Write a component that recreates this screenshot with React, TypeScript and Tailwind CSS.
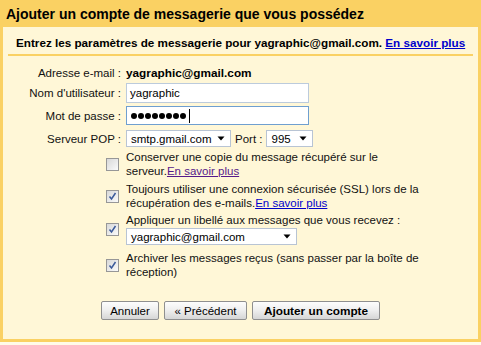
import React from "react";

const font = { fontFamily: '"Liberation Sans", Arial, sans-serif' };

function Check({ checked }: { checked: boolean }) {
  return (
    <span className="relative inline-block w-[13px] h-[13px] border border-[#979797] bg-gradient-to-br from-[#d8d8d8] to-[#fbfbfb]">
      {checked && (
        <svg className="absolute left-[1px] top-[1px]" width="9" height="9" viewBox="0 0 9 9">
          <path d="M1.5 4.5 L3.5 7 L7.5 1" fill="none" stroke="#3b5a9a" strokeWidth="1.5" />
        </svg>
      )}
    </span>
  );
}

function Arrow() {
  return (
    <svg width="8" height="5" viewBox="0 0 8 5" className="shrink-0">
      <path d="M0.5 0.5 L7.5 0.5 L4 4.5 Z" fill="#000" />
    </svg>
  );
}

function Select({ value, w }: { value: string; w: string }) {
  return (
    <div className={`${w} h-full bg-white border border-[#b8c4d4] flex items-center justify-between pl-[4px] pr-[5px] text-black`}>
      <span>{value}</span>
      <Arrow />
    </div>
  );
}

function Btn({ children, bold, w }: { children: React.ReactNode; bold?: boolean; w: string }) {
  return (
    <div
      className={`${w} h-[19px] flex items-center justify-center border border-[#8f8f8f] rounded-[2px] bg-gradient-to-b from-[#fdfdfd] via-[#eeeeee] to-[#d6d6d6] text-black ${bold ? "font-bold text-[11.8px]" : "text-[11.5px]"}`}
    >
      {children}
    </div>
  );
}

export default function App() {
  return (
    <div style={font} className="w-[481px] h-[345px] bg-[#fffbe9] text-[11.5px] text-[#111] leading-[14px]">
      <div className="bg-[#fad163] px-[3px] pb-[3px]">
        <div className="h-[27px] flex items-center pl-[3px] font-bold text-[14px] text-black">
          Ajouter un compte de messagerie que vous possédez
        </div>
        <div className="bg-[#fff7d7] h-[312px] flex flex-col">
          <div className="pt-[8px] pl-[13px] h-[27px] font-bold text-[11.7px] leading-[15px] text-black whitespace-nowrap">
            Entrez les paramètres de messagerie pour yagraphic@gmail.com.{" "}
            <span className="text-[#0000cc] underline">En savoir plus</span>
          </div>
          <div className="mx-[5px] h-[2px] bg-[#fad163]" />

          <div className="grid grid-cols-[118px_1fr] gap-x-[5px] mt-[8px]">
            <div className="h-[18px] flex items-center justify-end">Adresse e-mail :</div>
            <div className="h-[18px] flex items-center font-bold text-[11.8px] text-black">yagraphic@gmail.com</div>

            <div className="mt-[1px] h-[20px] flex items-center justify-end">Nom d'utilisateur :</div>
            <div className="mt-[1px] h-[20px]">
              <div className="w-[183px] h-full bg-white border border-[#bccbdc] flex items-center pl-[3px] text-black">
                yagraphic
              </div>
            </div>

            <div className="mt-[3px] h-[19px] flex items-center justify-end">Mot de passe :</div>
            <div className="mt-[3px] h-[19px]">
              <div className="w-[183px] h-full bg-white border border-[#6f9fd0] flex items-center pl-[4px] gap-[1px]">
                {[0, 1, 2, 3, 4, 5, 6, 7].map((i) => (
                  <span key={i} className="w-[6px] h-[6px] rounded-full bg-black" />
                ))}
                <span className="ml-[2px] w-[1px] h-[14px] bg-black" />
              </div>
            </div>

            <div className="mt-[5px] h-[17px] flex items-center justify-end">Serveur POP :</div>
            <div className="mt-[5px] h-[17px] flex items-center gap-[4px]">
              <Select value="smtp.gmail.com" w="w-[105px]" />
              <span>Port :</span>
              <Select value="995" w="w-[47px]" />
            </div>

            <div className="mt-[3px] flex items-center justify-end pr-[2px]">
              <Check checked={false} />
            </div>
            <div className="mt-[3px] whitespace-nowrap">
              Conserver une copie du message récupéré sur le
              <br />
              serveur.<span className="text-[#551a8b] underline">En savoir plus</span>
            </div>

            <div className="mt-[4px] flex items-center justify-end pr-[2px]">
              <Check checked />
            </div>
            <div className="mt-[4px] whitespace-nowrap">
              Toujours utiliser une connexion sécurisée (SSL) lors de la
              <br />
              récupération des e-mails.<span className="text-[#0000cc] underline">En savoir plus</span>
            </div>

            <div className="mt-[3px] flex items-center justify-end pr-[2px]">
              <Check checked />
            </div>
            <div className="mt-[3px] whitespace-nowrap">
              <div>Appliquer un libellé aux messages que vous recevez :</div>
              <div className="mt-[1px] h-[17px]">
                <Select value="yagraphic@gmail.com" w="w-[171px]" />
              </div>
            </div>

            <div className="mt-[6px] flex items-center justify-end pr-[2px]">
              <Check checked />
            </div>
            <div className="mt-[6px] whitespace-nowrap">
              Archiver les messages reçus (sans passer par la boîte de
              <br />
              réception)
            </div>
          </div>

          <div className="mt-[22px] flex justify-center gap-[5px]">
            <Btn w="w-[58px]">Annuler</Btn>
            <Btn w="w-[83px]">« Précédent</Btn>
            <Btn w="w-[128px]" bold>
              Ajouter un compte
            </Btn>
          </div>
        </div>
      </div>
    </div>
  );
}
